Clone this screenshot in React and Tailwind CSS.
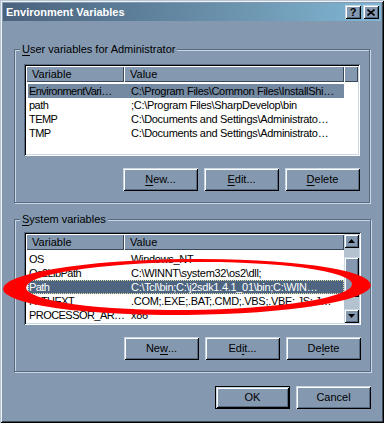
import React from 'react'

const raised =
  'shadow-[inset_1px_1px_0_#c9d6e3,inset_-1px_-1px_0_#000,inset_2px_2px_0_#fff,inset_-2px_-2px_0_#566a80]'
const sunken =
  'shadow-[inset_1px_1px_0_#566a80,inset_-1px_-1px_0_#fff,inset_2px_2px_0_#000,inset_-2px_-2px_0_#c9d6e3]'

const userVars = [
  ['EnvironmentVari…', 'C:\\Program Files\\Common Files\\InstallShi…'],
  ['path', ';C:\\Program Files\\SharpDevelop\\bin'],
  ['TEMP', 'C:\\Documents and Settings\\Administrato…'],
  ['TMP', 'C:\\Documents and Settings\\Administrato…'],
]

const systemVars = [
  ['OS', 'Windows_NT'],
  ['Os2LibPath', 'C:\\WINNT\\system32\\os2\\dll;'],
  ['Path', 'C:\\Tcl\\bin;C:\\j2sdk1.4.1_01\\bin;C:\\WIN…'],
  ['PATHEXT', '.COM;.EXE;.BAT;.CMD;.VBS;.VBE;.JS;.J…'],
  ['PROCESSOR_AR…', 'x86'],
]

function Key({ text, at }) {
  if (at < 0) return text
  return (
    <>
      {text.slice(0, at)}
      <span className="underline underline-offset-[2px]">{text[at]}</span>
      {text.slice(at + 1)}
    </>
  )
}

function Button({ label, at = -1, isDefault }) {
  return (
    <div className={`w-[75px] h-[23px] flex ${isDefault ? 'border border-black' : ''}`}>
      <div className={`flex-1 flex items-center justify-center bg-[#8499b0] ${raised}`}>
        <Key text={label} at={at} />
      </div>
    </div>
  )
}

function Arrow({ down }) {
  return (
    <div className={`h-[14px] flex items-center justify-center bg-[#8499b0] ${raised}`}>
      <svg width="7" height="4" viewBox="0 0 7 4">
        <path d={down ? 'M0 0h7L3.5 4z' : 'M3.5 0L7 4H0z'} fill="#000" />
      </svg>
    </div>
  )
}

function ListView({ rows, selected, focused, height, scroll }) {
  return (
    <div className={`bg-white p-[2px] flex ${sunken} ${height}`}>
      <div className="flex-1 flex flex-col overflow-hidden">
        <div className="h-[16px] flex shrink-0 bg-[#8499b0]">
          <div className="w-[98px] shrink-0 pl-[6px] flex items-center shadow-[inset_1px_1px_0_#fff,inset_-1px_-1px_0_#3a4756]">
            Variable
          </div>
          <div className="w-[220px] shrink-0 pl-[6px] flex items-center shadow-[inset_1px_1px_0_#fff,inset_-1px_-1px_0_#3a4756]">
            Value
          </div>
          <div className="flex-1 shadow-[inset_1px_1px_0_#fff,inset_-1px_-1px_0_#3a4756]" />
        </div>
        <div className="mt-[2px] flex flex-col">
          {rows.map(([name, value], i) => {
            const sel = i === selected
            return (
              <div
                key={name}
                className={`ml-[2px] w-[316px] shrink-0 h-[14px] flex items-center whitespace-nowrap ${
                  sel
                    ? focused
                      ? 'bg-[#4d6580] text-white outline outline-1 outline-dotted outline-[#e0e0a8] -outline-offset-1'
                      : 'bg-[#7489a2]'
                    : ''
                }`}
              >
                <div className="w-[96px] shrink-0 pl-[1px] overflow-hidden tracking-[-0.55px]">{name}</div>
                <div className="flex-1 pl-[7px] overflow-hidden tracking-[-0.3px]">{value}</div>
              </div>
            )
          })}
        </div>
      </div>
      {scroll && (
        <div className="w-[15px] flex flex-col bg-[#b4c2d0]">
          <Arrow />
          <div className="flex-1 pt-[9px]">
            <div className={`h-[40px] bg-[#8499b0] ${raised}`} />
          </div>
          <Arrow down />
        </div>
      )}
    </div>
  )
}

function Group({ title, at, className, children }) {
  return (
    <fieldset
      className={`w-[356px] border border-[#566a80] shadow-[1px_1px_0_#c9d6e3,inset_1px_1px_0_#c9d6e3] ${className}`}
    >
      <legend className="ml-[5px] px-[2px] leading-[13px] bg-[#8499b0]">
        <Key text={title} at={at} />
      </legend>
      <div className="px-[9px] pb-[11px]">{children}</div>
    </fieldset>
  )
}

function TitleButton({ children }) {
  return (
    <div className={`w-[16px] h-[14px] flex items-center justify-center bg-[#8499b0] ${raised}`}>
      {children}
    </div>
  )
}

export default function App() {
  return (
    <div className="relative w-[384px] h-[423px] bg-[#8499b0] p-[3px] flex flex-col overflow-hidden font-['Liberation_Sans',Arial,sans-serif] text-[11px] leading-[13px] text-black shadow-[inset_1px_1px_0_#b8c6d4,inset_-1px_-1px_0_#000,inset_2px_2px_0_#eef3f8,inset_-2px_-2px_0_#3c4a58]">
      <div className="h-[18px] shrink-0 flex items-center pl-[3px] pr-[2px] bg-[linear-gradient(to_right,#4a627d,#5d7e99_35%,#6e97b1_65%,#80b7d5)]">
        <span className="flex-1 font-bold text-white text-[11px]">Environment Variables</span>
        <div className="flex gap-[2px]">
          <TitleButton>
            <span className="font-bold text-[11px] leading-none">?</span>
          </TitleButton>
          <TitleButton>
            <svg width="8" height="7" viewBox="0 0 8 7">
              <path d="M0.5 0.5L7.5 6.5M7.5 0.5L0.5 6.5" stroke="#000" strokeWidth="1.6" />
            </svg>
          </TitleButton>
        </div>
      </div>

      <div className="pl-[11px] flex flex-col">
        <Group title="User variables for Administrator" at={0} className="mt-[22px]">
          <div className="mt-[8px]">
            <ListView rows={userVars} selected={0} height="h-[92px]" />
          </div>
          <div className="mt-[12px] flex justify-end gap-[6px]">
            <Button label="New..." at={0} />
            <Button label="Edit..." at={0} />
            <Button label="Delete" at={0} />
          </div>
        </Group>

        <Group title="System variables" at={0} className="mt-[10px]">
          <div className="mt-[6px]">
            <ListView rows={systemVars} selected={2} focused scroll height="h-[93px]" />
          </div>
          <div className="mt-[12px] flex justify-end gap-[6px]">
            <Button label="New..." at={2} />
            <Button label="Edit..." at={2} />
            <Button label="Delete" at={2} />
          </div>
        </Group>

        <div className="w-[357px] mt-[14px] flex justify-end gap-[6px]">
          <Button label="OK" isDefault />
          <Button label="Cancel" />
        </div>
      </div>

      <svg
        className="absolute left-0 top-0 pointer-events-none"
        width="384"
        height="423"
        viewBox="0 0 384 423"
      >
        <g transform="rotate(-0.6 187 287)">
          <path
            fillRule="evenodd"
            fill="#f00"
            d="M3 287a184 28 0 1 0 368 0a184 28 0 1 0 -368 0z M26 286a163 24 0 1 0 326 0a163 24 0 1 0 -326 0z"
          />
        </g>
      </svg>
    </div>
  )
}
